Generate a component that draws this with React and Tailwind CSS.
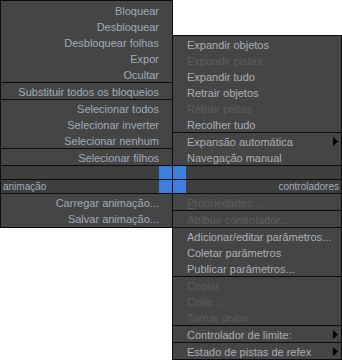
const leftGroups = [
  ["Bloquear", "Desbloquear", "Desbloquear folhas", "Expor", "Ocultar"],
  ["Substituir todos os bloqueios"],
  ["Selecionar todos", "Selecionar inverter", "Selecionar nenhum"],
  ["Selecionar filhos"],
];

const rightTop = [
  [
    { label: "Expandir objetos" },
    { label: "Expandir pistas", off: true },
    { label: "Expandir tudo" },
    { label: "Retrair objetos" },
    { label: "Retrair pistas", off: true },
    { label: "Recolher tudo" },
  ],
  [{ label: "Expansão automática", arrow: true }, { label: "Navegação manual" }],
];

const rightBottom = [
  [{ label: "Propriedades...", off: true, mnemonic: true }],
  [{ label: "Atribuir controlador...", off: true }],
  [
    { label: "Adicionar/editar parâmetros..." },
    { label: "Coletar parâmetros" },
    { label: "Publicar parâmetros..." },
  ],
  [
    { label: "Copiar", off: true },
    { label: "Colar...", off: true },
    { label: "Tornar único", off: true },
  ],
  [{ label: "Controlador de limite:", arrow: true }],
  [{ label: "Estado de pistas de refex", arrow: true }],
];

function Sep() {
  return <div className="h-px bg-[#0c0c0c]" />;
}

function Arrow() {
  return (
    <svg width="5" height="9" viewBox="0 0 5 9" className="absolute right-[3px] top-[4px]">
      <polygon points="0,0 5,4.5 0,9" fill="#000" />
    </svg>
  );
}

function RightItem({ item }) {
  return (
    <div
      className={`relative h-4 pl-[14px] pt-px text-[11px] leading-4 whitespace-nowrap ${
        item.off ? "text-[#5e5e5e]" : "text-[#adb0b6]"
      }`}
    >
      {item.mnemonic ? (
        <>
          <span className="underline">{item.label[0]}</span>
          {item.label.slice(1)}
        </>
      ) : (
        item.label
      )}
      {item.arrow && <Arrow />}
    </div>
  );
}

export default function App() {
  return (
    <div
      className="flex h-[360px] w-[342px] items-start overflow-hidden bg-white"
      style={{ fontFamily: '"Liberation Sans", Arial, sans-serif' }}
    >
      {/* left quad */}
      <div className="w-[173px] border border-[#0c0c0c] bg-[#454545] pt-px pb-px">
        {leftGroups.map((g, i) => (
          <div key={i}>
            {i > 0 && <Sep />}
            {g.map((t) => (
              <div key={t} className="h-4 pr-[13px] pt-px text-right text-[11px] leading-4 whitespace-nowrap text-[#a2abb8]">
                {t}
              </div>
            ))}
          </div>
        ))}
        <Sep />
        <div className="flex h-[13px] bg-[#3e3e3e]">
          <div className="flex-1" />
          <div className="w-[13px] bg-[#3b7fdf]" />
        </div>
        <Sep />
        <div className="flex h-[13px] bg-[#3e3e3e]">
          <div className="flex-1 pl-[2px] text-[10px] leading-[13px] text-[#a3adbc]">animação</div>
          <div className="w-[13px] bg-[#3b7fdf]" />
        </div>
        <Sep />
        {["Carregar animação...", "Salvar animação..."].map((t) => (
          <div key={t} className="h-4 pr-[13px] pt-px text-right text-[11px] leading-4 whitespace-nowrap text-[#a2abb8]">
            {t}
          </div>
        ))}
      </div>

      {/* right quad */}
      <div className="-ml-px mt-[35px] w-[170px] border border-[#0c0c0c] bg-[#454545]">
        {rightTop.map((g, i) => (
          <div key={i}>
            {i > 0 && <Sep />}
            {g.map((it) => (
              <RightItem key={it.label} item={it} />
            ))}
          </div>
        ))}
        <Sep />
        <div className="flex h-[13px] bg-[#3e3e3e]">
          <div className="w-[13px] bg-[#3b7fdf]" />
          <div className="flex-1" />
        </div>
        <Sep />
        <div className="flex h-[13px] bg-[#3e3e3e]">
          <div className="w-[13px] bg-[#3b7fdf]" />
          <div className="flex-1 pr-[2px] text-right text-[10px] leading-[13px] text-[#a3adbc]">controladores</div>
        </div>
        {rightBottom.map((g, i) => (
          <div key={i}>
            <Sep />
            {g.map((it) => (
              <RightItem key={it.label} item={it} />
            ))}
          </div>
        ))}
      </div>
    </div>
  );
}
